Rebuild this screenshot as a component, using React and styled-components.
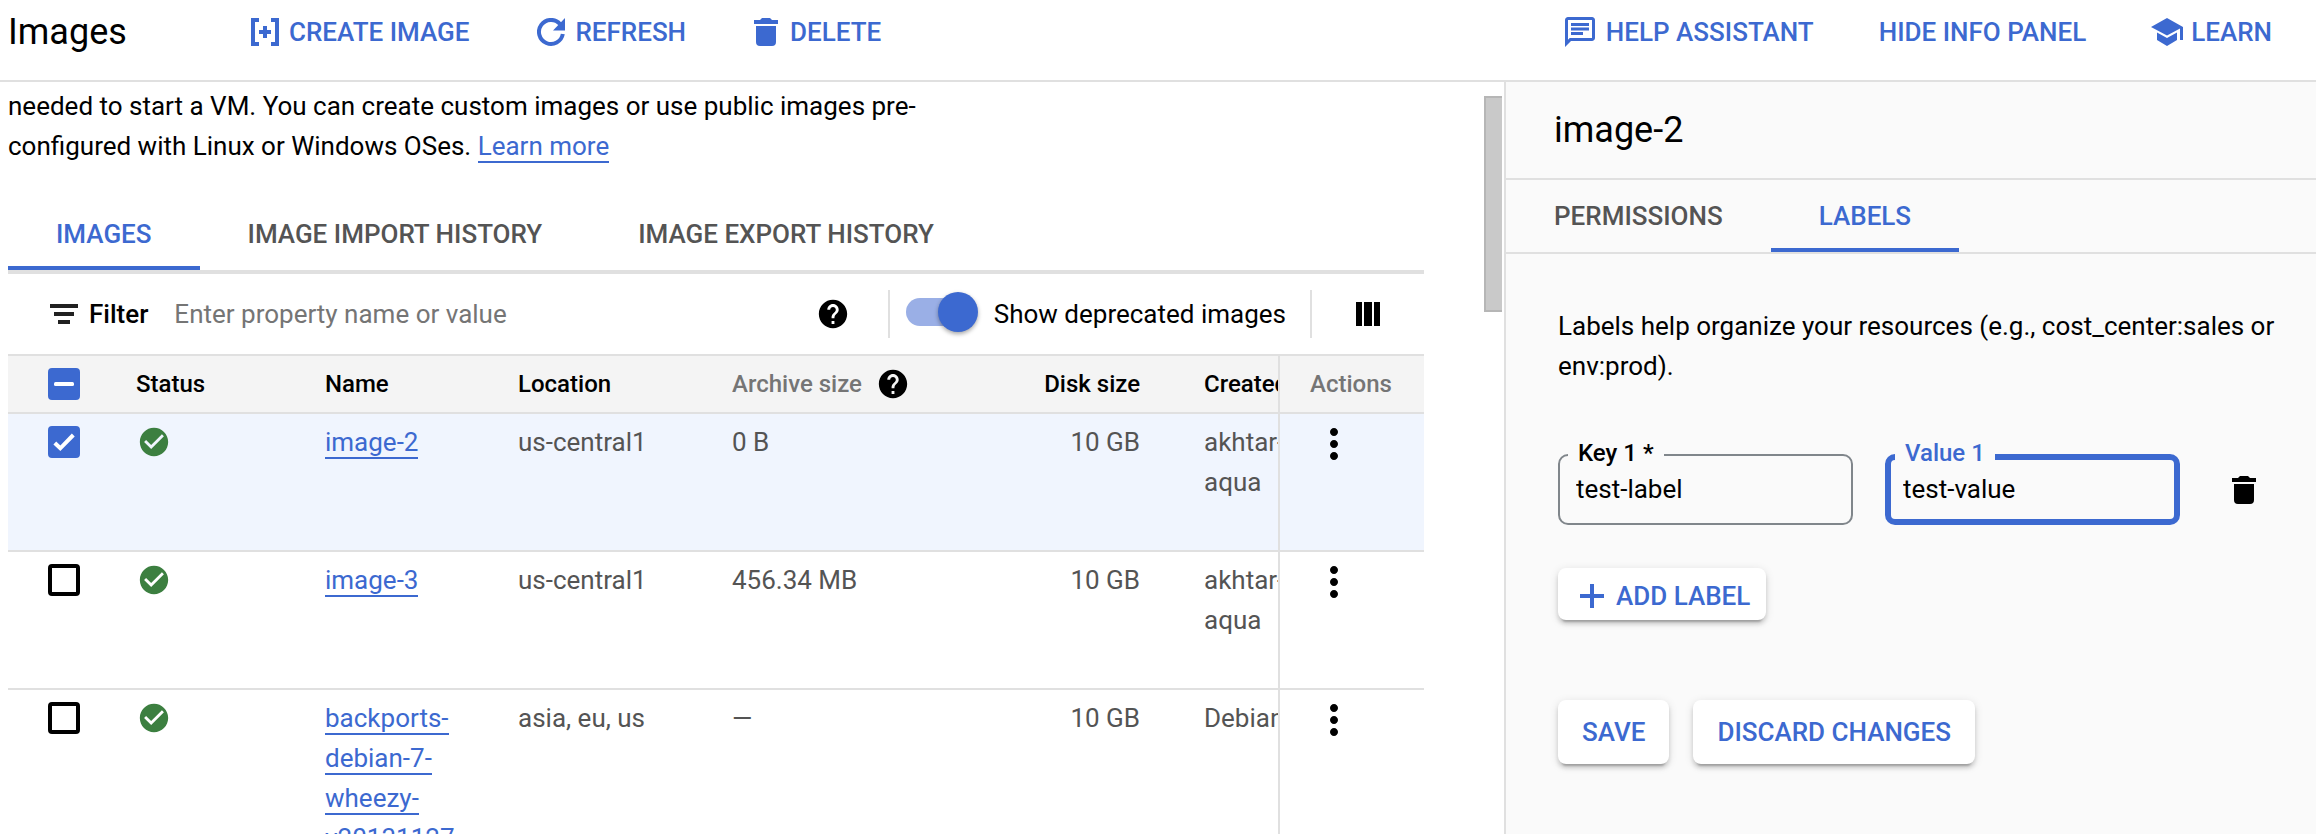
import React from 'react';
import styled, { createGlobalStyle } from 'styled-components';
import { MdOutlineChat, MdHelp, MdCheckCircle, MdMoreVert } from 'react-icons/md';

const c = {
  blue: '#3c69d0',
  line: '#e0e0e0',
  text: '#000000',
  grey: '#545454',
  muted: '#757575',
};

const Global = createGlobalStyle`
  *, *::before, *::after { box-sizing: border-box; }
  html, body, #root { height: 100%; }
  body {
    margin: 0;
    background: #fff;
    color: ${c.text};
    font: 400 26px/40px Roboto, sans-serif;
    overflow: hidden;
  }
  button, input { font: inherit; color: inherit; }
  button { background: none; border: 0; padding: 0; cursor: pointer; }
  h1, h2, p { margin: 0; }
  svg { display: block; flex: none; }
`;

const Page = styled.div`
  height: 100%;
  display: flex;
  flex-direction: column;
`;

const Header = styled.header`
  flex: none;
  height: 82px;
  padding: 0 44px 16px 8px;
  display: flex;
  align-items: center;
  border-bottom: 2px solid ${c.line};
`;

const Title = styled.h1`
  font-size: 36px;
  font-weight: 400;
  line-height: 48px;
  width: 243px;
`;

const Group = styled.div`
  display: flex;
  align-items: center;
  gap: ${p => p.$gap}px;
`;

const Spacer = styled.div`
  flex: 1;
`;

const Action = styled.button`
  display: flex;
  align-items: center;
  gap: ${p => p.$gap || 8}px;
  color: ${c.blue};
  font-weight: 500;
  white-space: nowrap;
`;

const Body = styled.div`
  flex: 1;
  min-height: 0;
  display: flex;
`;

const Main = styled.main`
  flex: 1;
  min-width: 0;
  overflow: hidden;
  padding: 4px 60px 0 8px;
`;

const ScrollTrack = styled.div`
  flex: none;
  width: 20px;
  padding: 14px 2px 0 0;
`;

const ScrollThumb = styled.div`
  height: 216px;
  background: #c9c9c9;
  border: 2px solid #b6b6b6;
  border-right: 0;
`;

const Intro = styled.p`
  max-width: 940px;
`;

const Link = styled.a`
  color: ${c.blue};
  text-decoration: none;
  border-bottom: 2px solid ${c.blue};
`;

const Tabs = styled.nav`
  display: flex;
  ${p => p.$panel
    ? `height: 74px; padding-top: 4px; border-bottom: 2px solid ${c.line};`
    : `height: 72px; margin-top: 36px; border-bottom: 4px solid ${c.line};`}
`;

const Tab = styled.button`
  padding: 0 48px;
  color: ${p => (p.$active ? c.blue : c.grey)};
  font-weight: 500;
  border-bottom: 4px solid ${p => (p.$active ? c.blue : 'transparent')};
  white-space: nowrap;
`;

const FilterBar = styled.div`
  height: 80px;
  display: flex;
  align-items: center;
  padding: 0 44px 0 42px;
`;

const FilterLabel = styled.label`
  display: flex;
  align-items: center;
  gap: 11px;
  font-weight: 500;
`;

const FilterInput = styled.input`
  flex: 1;
  min-width: 0;
  margin-left: 26px;
  padding: 0;
  border: 0;
  outline: 0;
  background: none;
  &::placeholder { color: #757575; opacity: 1; }
`;

const Divider = styled.div`
  width: 2px;
  height: 48px;
  background: ${c.line};
  margin: 0 ${p => p.$right}px 0 ${p => p.$left}px;
`;

const SwitchLabel = styled.label`
  display: flex;
  align-items: center;
  gap: 16px;
  white-space: nowrap;
`;

const Switch = styled.input`
  appearance: none;
  position: relative;
  width: 72px;
  height: 40px;
  margin: 0;
  &::before {
    content: '';
    position: absolute;
    left: 0;
    right: 8px;
    top: 4px;
    height: 28px;
    border-radius: 14px;
    background: #9aafe6;
  }
  &::after {
    content: '';
    position: absolute;
    right: 0;
    top: -2px;
    width: 40px;
    height: 40px;
    border-radius: 50%;
    background: ${c.blue};
    box-shadow: 0 2px 4px rgba(0, 0, 0, 0.35);
  }
`;

const Table = styled.table`
  width: 100%;
  table-layout: fixed;
  border-collapse: separate;
  border-spacing: 0;
`;

const Col = styled.col`
  width: ${p => (p.$w ? `${p.$w}px` : 'auto')};
`;

const Tr = styled.tr`
  height: ${p => (p.$head ? 60 : 138)}px;
  background: ${p => (p.$head ? '#f4f4f4' : p.$selected ? '#f0f5fe' : '#fff')};
`;

const Th = styled.th`
  height: 60px;
  padding: 0 0 0 ${p => p.$pad || 0}px;
  border-top: 2px solid ${c.line};
  border-bottom: 2px solid ${c.line};
  font-weight: 500;
  font-size: 24px;
  text-align: ${p => (p.$right ? 'right' : 'left')};
  color: ${p => (p.$muted ? c.muted : c.text)};
  overflow: hidden;
  white-space: nowrap;
  ${p => p.$edge && `border-left: 2px solid ${c.line};`}
`;

const Td = styled.td`
  padding: 8px 0 0 ${p => p.$pad || 0}px;
  vertical-align: top;
  color: ${c.grey};
  text-align: ${p => (p.$right ? 'right' : 'left')};
  border-bottom: 2px solid ${c.line};
  overflow: hidden;
  ${p => p.$edge && `border-left: 2px solid ${c.line};`}
`;

const Tick = styled.span`
  display: flex;
  align-items: center;
  height: 40px;
  position: relative;
  & > svg {
    position: absolute;
    left: 0;
    color: #fff;
    pointer-events: none;
  }
`;

const TickBox = styled.input`
  appearance: none;
  width: 32px;
  height: 32px;
  margin: 0;
  border-radius: 4px;
  border: 4px solid ${p => (p.$filled ? c.blue : '#000')};
  background: ${p => (p.$filled ? c.blue : '#fff')};
`;

const StatusCell = styled.span`
  display: flex;
  align-items: center;
  height: 40px;
  color: #3c7f40;
`;

const MenuButton = styled.button`
  display: flex;
  align-items: center;
  height: 44px;
  color: #000;
`;

const Panel = styled.aside`
  flex: none;
  width: 812px;
  background: #fafafa;
  border-left: 2px solid ${c.line};
`;

const PanelTitle = styled.h2`
  height: 98px;
  padding: 0 48px;
  font-size: 36px;
  font-weight: 400;
  line-height: 96px;
  border-bottom: 2px solid ${c.line};
`;

const PanelBody = styled.div`
  padding: 52px 40px 0 52px;
`;

const FieldRow = styled.div`
  display: flex;
  align-items: center;
  margin-top: 54px;
  gap: 32px;
`;

const Field = styled.fieldset`
  width: 295px;
  height: 85px;
  min-width: 0;
  margin: 0;
  padding: 0 ${p => (p.$focus ? 12 : 16)}px;
  border: ${p => (p.$focus ? `6px solid ${c.blue}` : '2px solid #80868b')};
  border-radius: 10px;
`;

const Legend = styled.legend`
  margin-left: -8px;
  padding: 0 10px ${p => (p.$focus ? 8 : 4)}px;
  font-size: 24px;
  font-weight: 500;
  line-height: 26px;
  color: ${p => (p.$focus ? c.blue : c.text)};
`;

const FieldInput = styled.input`
  display: block;
  width: 100%;
  height: 38px;
  margin: ${p => (p.$focus ? -4 : 0)}px 0 0;
  padding: 0;
  border: 0;
  outline: 0;
  background: none;
`;

const IconButton = styled.button`
  margin-left: 20px;
  padding-top: 14px;
`;

const Raised = styled.button`
  display: flex;
  align-items: center;
  gap: 12px;
  height: ${p => (p.$small ? 52 : 64)}px;
  padding: ${p => (p.$small ? '4px 16px 0 22px' : '0 24px')};
  border-radius: 8px;
  background: #fff;
  color: ${c.blue};
  font-weight: 500;
  white-space: nowrap;
  box-shadow: 0 6px 2px -4px rgba(0, 0, 0, 0.2), 0 4px 4px rgba(0, 0, 0, 0.14), 0 2px 10px rgba(0, 0, 0, 0.12);
`;

const ButtonRow = styled.div`
  display: flex;
  gap: 24px;
  margin-top: ${p => p.$top}px;
`;

const HeadInner = styled.span`
  display: flex;
  align-items: center;
  gap: 14px;
`;

const CreateIcon = () => (
  <svg width="28" height="28" viewBox="0 0 28 28" fill="currentColor" aria-hidden="true">
    <path d="M0 0h8v4H4v20h4v4H0zM28 0h-8v4h4v20h-4v4h8zM12 8h4v4h4v4h-4v4h-4v-4H8v-4h4z" />
  </svg>
);

const RefreshIcon = () => (
  <svg width="28" height="28" viewBox="0 0 28 28" aria-hidden="true">
    <path d="M25.8 16A12 12 0 1 1 23 6" fill="none" stroke="currentColor" strokeWidth="4" />
    <path d="M28 0v12.5H16z" fill="currentColor" />
  </svg>
);

const TrashIcon = () => (
  <svg width="24" height="28" viewBox="0 0 24 28" fill="currentColor" aria-hidden="true">
    <path d="M8 0h8l2 2h6v4H0V2h6zM2 8h20v16a4 4 0 0 1-4 4H6a4 4 0 0 1-4-4z" />
  </svg>
);

const LearnIcon = () => (
  <svg width="32" height="28" viewBox="0 0 32 28" fill="currentColor" aria-hidden="true">
    <path d="M16 0L0 9l16 8.5L29 10.500V22h3V9zM6 14.500V22l10 6 10-6v-7.500L16 20z" />
  </svg>
);

const FilterIcon = () => (
  <svg width="28" height="20" viewBox="0 0 28 20" fill="#212121" aria-hidden="true">
    <path d="M0 0h28v4H0zM4 8h20v4H4zM8 16h12v4H8z" />
  </svg>
);

const ColumnsIcon = () => (
  <svg width="24" height="24" viewBox="0 0 24 24" fill="#000" aria-hidden="true">
    <path d="M0 0h6v24H0zM8 0h8v24H8zM18 0h6v24h-6z" />
  </svg>
);

const PlusIcon = () => (
  <svg width="24" height="24" viewBox="0 0 24 24" fill="currentColor" aria-hidden="true">
    <path d="M10 0h4v10h10v4H14v10h-4V14H0v-4h10z" />
  </svg>
);

const CheckMark = () => (
  <svg width="32" height="32" viewBox="0 0 32 32" fill="none" stroke="currentColor" strokeWidth="4" aria-hidden="true">
    <path d="M6.800 17l5.500 5.300L25.300 9" />
  </svg>
);

const DashMark = () => (
  <svg width="32" height="32" viewBox="0 0 32 32" fill="currentColor" aria-hidden="true">
    <rect x="6" y="14" width="20" height="4" rx="1.500" />
  </svg>
);

const rows = [
  { name: 'image-2', location: 'us-central1', archive: '0 B', disk: '10 GB', by: 'akhtar-aqua', selected: true },
  { name: 'image-3', location: 'us-central1', archive: '456.34 MB', disk: '10 GB', by: 'akhtar-aqua' },
  { name: 'backports-debian-7-wheezy-v20131127', location: 'asia, eu, us', archive: '—', disk: '10 GB', by: 'Debian' },
];

function Row({ row }) {
  return (
    <Tr $selected={row.selected}>
      <Td $pad={40}>
        <Tick>
          <TickBox type="checkbox" aria-label={`Select ${row.name}`} defaultChecked={!!row.selected} $filled={row.selected} />
          {row.selected && <CheckMark />}
        </Tick>
      </Td>
      <Td $pad={1}><StatusCell><MdCheckCircle size={34} /></StatusCell></Td>
      <Td><Link href="#">{row.name}</Link></Td>
      <Td>{row.location}</Td>
      <Td>{row.archive}</Td>
      <Td $right>{row.disk}</Td>
      <Td $pad={64}>{row.by}</Td>
      <Td $edge $pad={30}><MenuButton aria-label={`Actions for ${row.name}`}><MdMoreVert size={48} /></MenuButton></Td>
    </Tr>
  );
}

export default function App() {
  return (
    <Page>
      <Global />
      <Header>
        <Title>Images</Title>
        <Group $gap={68}>
          <Action $gap={10}><CreateIcon />CREATE IMAGE</Action>
          <Action $gap={10}><RefreshIcon />REFRESH</Action>
          <Action $gap={12}><TrashIcon />DELETE</Action>
        </Group>
        <Spacer />
        <Group $gap={65}>
          <Action><MdOutlineChat size={36} />HELP ASSISTANT</Action>
          <Action>HIDE INFO PANEL</Action>
          <Action><LearnIcon />LEARN</Action>
        </Group>
      </Header>
      <Body>
        <Main>
          <Intro>
            needed to start a VM. You can create custom images or use public images pre-configured with Linux or Windows OSes. <Link href="#">Learn more</Link>
          </Intro>
          <Tabs>
            <Tab $active>IMAGES</Tab>
            <Tab>IMAGE IMPORT HISTORY</Tab>
            <Tab>IMAGE EXPORT HISTORY</Tab>
          </Tabs>
          <FilterBar>
            <FilterLabel htmlFor="filter"><FilterIcon />Filter</FilterLabel>
            <FilterInput id="filter" placeholder="Enter property name or value" />
            <MdHelp size={34} />
            <Divider $left={38} $right={16} />
            <SwitchLabel><Switch type="checkbox" role="switch" defaultChecked />Show deprecated images</SwitchLabel>
            <Divider $left={24} $right={44} />
            <button aria-label="Column display options"><ColumnsIcon /></button>
          </FilterBar>
          <Table>
            <colgroup>
              <Col $w={128} />
              <Col $w={189} />
              <Col $w={193} />
              <Col $w={214} />
              <Col $w={212} />
              <Col />
              <Col $w={138} />
              <Col $w={146} />
            </colgroup>
            <thead>
              <Tr $head>
                <Th $pad={40}>
                  <Tick>
                    <TickBox type="checkbox" aria-label="Select all" $filled />
                    <DashMark />
                  </Tick>
                </Th>
                <Th>Status</Th>
                <Th>Name</Th>
                <Th>Location</Th>
                <Th $muted><HeadInner>Archive size <MdHelp size={34} color="#000" /></HeadInner></Th>
                <Th $right>Disk size</Th>
                <Th $pad={64}>Created</Th>
                <Th $edge $muted $pad={30}>Actions</Th>
              </Tr>
            </thead>
            <tbody>
              {rows.map(r => <Row key={r.name} row={r} />)}
            </tbody>
          </Table>
        </Main>
        <ScrollTrack><ScrollThumb /></ScrollTrack>
        <Panel>
          <PanelTitle>image-2</PanelTitle>
          <Tabs $panel>
            <Tab>PERMISSIONS</Tab>
            <Tab $active>LABELS</Tab>
          </Tabs>
          <PanelBody>
            <p>Labels help organize your resources (e.g., cost_center:sales or env:prod).</p>
            <FieldRow>
              <Field>
                <Legend><label htmlFor="key1">Key 1 *</label></Legend>
                <FieldInput id="key1" defaultValue="test-label" />
              </Field>
              <Field $focus>
                <Legend $focus><label htmlFor="value1">Value 1</label></Legend>
                <FieldInput $focus id="value1" defaultValue="test-value" />
              </Field>
              <IconButton aria-label="Delete label"><TrashIcon /></IconButton>
            </FieldRow>
            <ButtonRow $top={43}>
              <Raised $small><PlusIcon />ADD LABEL</Raised>
            </ButtonRow>
            <ButtonRow $top={80}>
              <Raised>SAVE</Raised>
              <Raised>DISCARD CHANGES</Raised>
            </ButtonRow>
          </PanelBody>
        </Panel>
      </Body>
    </Page>
  );
}
